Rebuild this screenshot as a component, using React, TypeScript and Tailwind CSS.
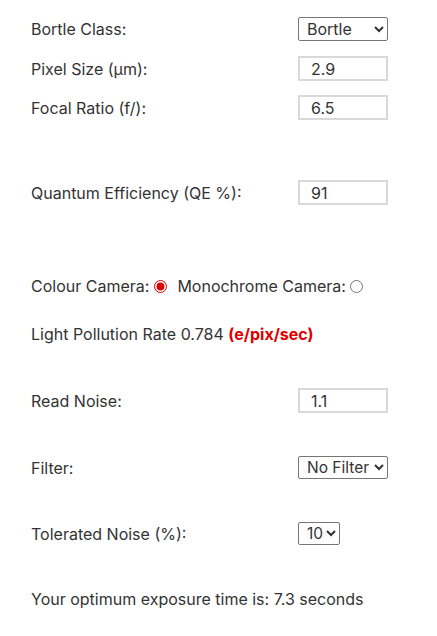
import React from "react";

const font = { fontFamily: "Inter, 'Noto Sans', sans-serif" };

function Label({ children }: { children: React.ReactNode }) {
  return <div className="w-[267px] shrink-0">{children}</div>;
}

function TextInput({ value }: { value: string }) {
  return (
    <input
      readOnly
      value={value}
      className="w-[90px] h-[25px] border-2 border-[#d9d9d9] pl-[11px] text-[16px] text-[#333] outline-none bg-white"
    />
  );
}

function Select({ value, width, options }: { value: string; width: string; options: string[] }) {
  return (
    <select
      defaultValue={value}
      className={`${width} h-[23px] border border-[#767676] rounded-[2px] pl-[4px] text-[15.5px] text-[#333] bg-white`}
    >
      {options.map((o) => (
        <option key={o}>{o}</option>
      ))}
    </select>
  );
}

export default function App() {
  return (
    <div className="bg-white min-h-[636px] w-[437px] pl-[31px] pt-[17px] text-[16px] text-[#333]" style={font}>
      <div className="flex items-center h-[24px]">
        <Label>Bortle Class:</Label>
        <select
          defaultValue="Bortle"
          className="w-[90px] h-[24px] border border-[#767676] rounded-[2px] pl-[4px] text-[16px] text-[#333] bg-white"
        >
          <option>Bortle</option>
          <option>1</option>
          <option>2</option>
        </select>
      </div>
      <div className="flex items-center h-[25px] mt-[15px]">
        <Label>Pixel Size (µm):</Label>
        <TextInput value="2.9" />
      </div>
      <div className="flex items-center h-[25px] mt-[14px]">
        <Label>Focal Ratio (f/):</Label>
        <TextInput value="6.5" />
      </div>
      <div className="flex items-center h-[25px] mt-[60px]">
        <Label>Quantum Efficiency (QE %):</Label>
        <TextInput value="91" />
      </div>
      <div className="flex items-center h-[20px] mt-[71px]">
        <span>Colour Camera:</span>
        <input type="radio" name="cam" defaultChecked className="w-[13px] h-[13px] ml-[5px] mr-[10px] accent-[#e00000]" />
        <span>Monochrome Camera:</span>
        <input type="radio" name="cam" className="w-[13px] h-[13px] ml-[4px] accent-[#e00000]" />
      </div>
      <div className="flex items-center h-[20px] mt-[28px]">
        <span>
          Light Pollution Rate 0.784 <b className="font-bold text-[#e00000]">(e/pix/sec)</b>
        </span>
      </div>
      <div className="flex items-center h-[25px] mt-[44px]">
        <Label>Read Noise:</Label>
        <TextInput value="1.1" />
      </div>
      <div className="flex items-center h-[23px] mt-[43px]">
        <Label>Filter:</Label>
        <Select value="No Filter" width="w-[90px]" options={["No Filter", "L-Pro", "L-eNhance"]} />
      </div>
      <div className="flex items-center h-[23px] mt-[43px]">
        <Label>Tolerated Noise (%):</Label>
        <Select value="10" width="w-[42px]" options={["5", "10", "15"]} />
      </div>
      <div className="flex items-center h-[20px] mt-[44px]">
        <span>Your optimum exposure time is: 7.3 seconds</span>
      </div>
    </div>
  );
}
